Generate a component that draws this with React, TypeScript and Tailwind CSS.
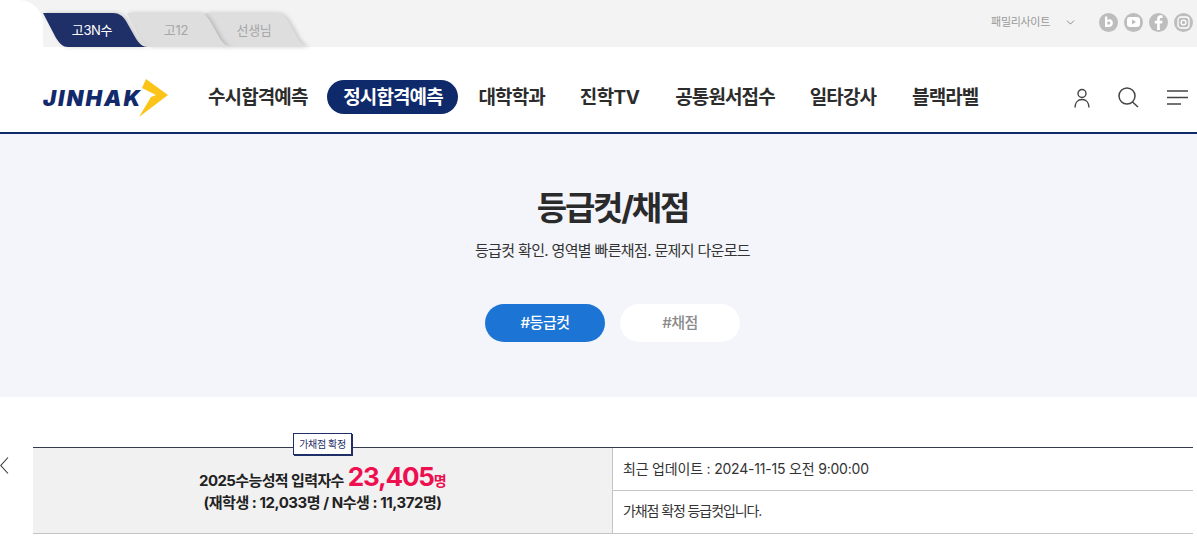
import React from "react";
import { ChevronDown } from "lucide-react";

const F = "font-['Inter','Noto_Sans_CJK_KR',sans-serif]";

function Tab({ label, active, margin, z, topRight }: { label: string; active?: boolean; margin: string; z: string; topRight: number }) {
  const t = topRight;
  return (
    <div className={`relative w-[98px] h-[34px] flex items-center justify-center pt-[1px] ${margin} ${z}`}>
      <svg className="absolute left-0 top-0 overflow-visible drop-shadow-[2px_0_2px_rgba(0,0,0,0.18)]" width="106" height="34" viewBox="0 0 106 34" fill="none">
        <path d={`M0 0 H${t - 8} C${t - 2} 0 ${t + 2} 3 ${t + 5} 8 L${t + 14} 24 C${t + 18} 31 ${t + 22} 34 ${t + 27} 34 H25 C20 34 17 31 13 25 Z`} fill={active ? "#1f3068" : "#dedede"} />
      </svg>
      <span className={`relative text-[13px] tracking-[-0.3px] ${active ? "text-white" : "text-[#a6a6a6]"}`}>{label}</span>
    </div>
  );
}

function Social({ children }: { children: React.ReactNode }) {
  return <span className="w-[19px] h-[19px] rounded-full bg-[#bdbdbd] flex items-center justify-center">{children}</span>;
}

export default function App() {
  return (
    <div className={`${F} w-[1197px] h-[550px] overflow-hidden bg-white text-[#222]`}>
      <div className="h-[47px] bg-[#f3f3f3] flex justify-between">
        <div className="flex">
          <div className="w-[43px] h-[47px] bg-white rounded-tr-[24px]" />
          <div className="flex pt-[13px]">
            <Tab label="고3N수" active margin="" z="z-30" topRight={78} />
            <Tab label="고12" margin="-ml-[14px]" z="z-20" topRight={78} />
            <Tab label="선생님" margin="-ml-[20px]" z="z-10" topRight={78} />
          </div>
        </div>
        <div className="flex items-center pr-[4px] pb-[3px]">
          <span className="text-[11px] tracking-[-0.3px] text-[#999]">패밀리사이트</span>
          <ChevronDown className="ml-[14px] mr-[22px] w-[13px] h-[13px] text-[#555]" strokeWidth={1.2} />
          <div className="flex gap-[6px]">
            <Social>
              <svg width="11" height="12" viewBox="0 0 11 12"><path fill="#fff" d="M2 .5h2.300v3.600c.6-.5 1.400-.8 2.200-.8 2 0 3.400 1.600 3.400 3.800s-1.600 4-3.700 4H2zM5.700 5.400c-.9 0-1.500.7-1.500 1.700s.6 1.700 1.500 1.700 1.600-.7 1.600-1.700-.7-1.700-1.600-1.700z" /></svg>
            </Social>
            <Social>
              <svg width="13" height="10" viewBox="0 0 13 10"><rect width="13" height="10" rx="3" fill="#fff" /><path d="M5 2.600v4.800L9 5z" fill="#bdbdbd" /></svg>
            </Social>
            <Social>
              <svg width="9" height="15" viewBox="0 0 9 15"><path fill="#fff" d="M5.800 15V8.500h2.300l.4-2.700H5.800V4.200c0-.8.3-1.300 1.400-1.300h1.400V.5C8.200.4 7.500.3 6.600.3 4.500.3 3.100 1.500 3.100 3.800v2H.8v2.700h2.300V15z" /></svg>
            </Social>
            <Social>
              <svg width="13" height="13" viewBox="0 0 13 13" fill="none" stroke="#fff" strokeWidth="1.300"><rect x="1" y="1" width="11" height="11" rx="3" /><circle cx="6.500" cy="6.500" r="2.400" /></svg>
            </Social>
          </div>
        </div>
      </div>

      <header className="h-[87px] border-b-2 border-[#0f2a6b] flex items-center pl-[43px] pr-[9px] pt-[16px]">
        <div className="relative w-[126px] h-[38px] flex items-center shrink-0">
          <span className="font-['Inter',sans-serif] italic font-black text-[22px] leading-none tracking-[2px] text-[#12296b]">JINHAK</span>
          <svg className="absolute left-[96px] top-0" width="30" height="38" viewBox="0 0 30 38"><path fill="#fcc419" d="M7 0 29 16 0 38 12 18 17 16 3 9Z" /></svg>
        </div>
        <nav className="flex items-center ml-[39px] text-[19px] font-bold tracking-[-0.9px] text-[#2c2c2c] leading-none">
          <span>수시합격예측</span>
          <span className="ml-[20px] -mt-[2px] pt-[2px] w-[131px] h-[34px] rounded-full bg-[#0f2a6b] text-white flex items-center justify-center">정시합격예측</span>
          <span className="ml-[20px]">대학학과</span>
          <span className="ml-[35px] tracking-[-0.6px]">진학TV</span>
          <span className="ml-[36px]">공통원서접수</span>
          <span className="ml-[35px]">일타강사</span>
          <span className="ml-[36px]">블랙라벨</span>
        </nav>
        <div className="ml-auto flex items-center gap-[28px]">
          <svg width="16" height="20" viewBox="0 0 16 20" fill="none" stroke="#444" strokeWidth="1.400"><circle cx="8" cy="5.500" r="4" /><path d="M1 19.500c0-5 3-8 7-8s7 3 7 8" /></svg>
          <svg width="21" height="21" viewBox="0 0 21 21" fill="none" stroke="#444" strokeWidth="1.500"><circle cx="9" cy="9" r="8" /><path d="M14.500 15l5.500 5" /></svg>
          <svg width="21" height="15" viewBox="0 0 21 15" stroke="#444" strokeWidth="1.600"><path d="M0 1h21M0 7.500h21M0 14h14" /></svg>
        </div>
      </header>

      <section className="h-[263px] bg-[#f3f5fa] flex flex-col items-center pt-[50px] pl-[28px]">
        <h1 className="text-[33px] leading-[48px] font-bold tracking-[-2.2px] text-[#2a2a2a]">등급컷/채점</h1>
        <p className="mt-[8px] text-[15px] leading-[22px] tracking-[-0.65px] text-[#333]">등급컷 확인. 영역별 빠른채점. 문제지 다운로드</p>
        <div className="mt-[42px] flex gap-[15px]">
          <button className="w-[120px] h-[38px] rounded-full bg-[#1c74d4] text-white text-[15px] font-medium tracking-[-0.5px]">#등급컷</button>
          <button className="w-[120px] h-[38px] rounded-full bg-white text-[#8a8a8a] text-[15px] font-medium tracking-[-0.5px]">#채점</button>
        </div>
      </section>

      <section className="relative pt-[50px] pl-[33px] pr-[4px]">
        <svg className="absolute left-0 top-[60px]" width="9" height="17" viewBox="0 0 9 17" fill="none" stroke="#333" strokeWidth="1.100"><path d="M8 .5 .8 8.500 8 16.500" /></svg>
        <div className="relative flex h-[87px] border-t border-[#333b4d] border-b border-b-[#c4c4c4]">
          <span className="absolute left-[260px] top-[-15px] w-[59px] h-[22px] bg-white border border-[#1f3068] shadow-[1px_1px_0_#1f3068] flex items-center justify-center text-[10px] tracking-[-0.4px] text-[#1f3068]">가채점 확정</span>
          <div className="w-[580px] bg-[#f1f1f1] border-r border-[#c4c4c4] flex flex-col items-center pt-[15px]">
            <div className="flex items-baseline h-[28px] text-[15px] font-bold tracking-[-0.6px] text-[#222]">
              2025수능성적 입력자수
              <b className="ml-[4px] text-[26px] leading-[28px] font-bold tracking-[-1.2px] text-[#ee0f50]">23,405</b>
              <b className="text-[14px] font-bold text-[#ee0f50]">명</b>
            </div>
            <div className="mt-[2px] text-[15px] font-bold leading-[20px] tracking-[-0.45px] text-[#222]">(재학생 : 12,033명 / N수생 : 11,372명)</div>
          </div>
          <div className="flex-1 flex flex-col text-[14px] text-[#333]">
            <div className="h-[43px] flex items-center pl-[10px] border-b border-[#c4c4c4] pb-[1px] tracking-[-0.2px]">최근 업데이트 : 2024-11-15 오전 9:00:00</div>
            <div className="flex-1 flex items-center pl-[10px] pb-[4px] tracking-[-1.1px]">가채점 확정 등급컷입니다.</div>
          </div>
        </div>
      </section>
    </div>
  );
}
